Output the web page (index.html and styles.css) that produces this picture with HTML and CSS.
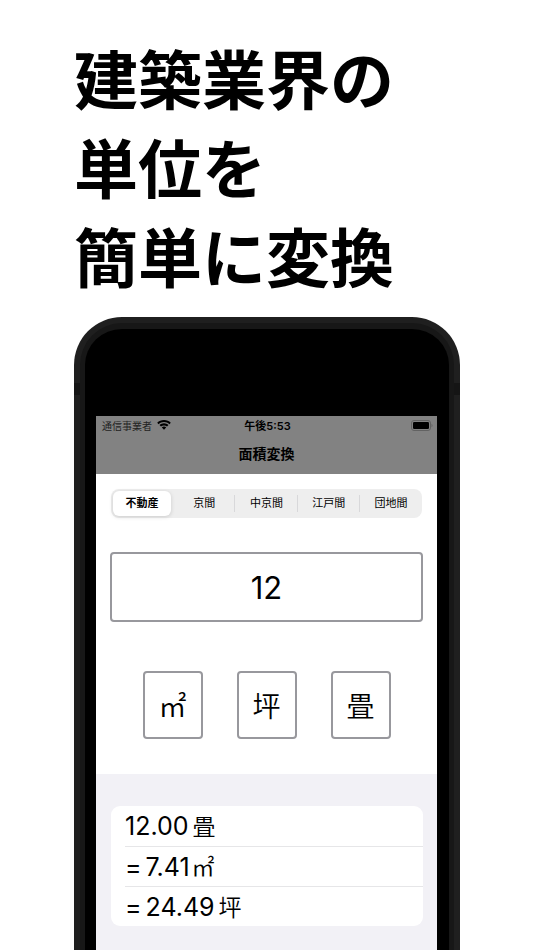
FILE: index.html
```html
<!DOCTYPE html>
<html lang="ja">
<head>
    <meta charset="UTF-8">
    <meta name="viewport" content="width=device-width, initial-scale=1.0">
    <title>面積変換</title>
    <link rel="stylesheet" href="styles.css">
</head>
<body>
    <h1 class="headline">建築業界の<br>単位を<br>簡単に変換</h1>

    <!-- Phone -->
    <div class="phone">
        <div class="bezel">
            <main class="screen">
                <header class="top">
                    <div class="status">
                        <div class="carrier">
                            <span>通信事業者</span>
                            <svg class="wifi" viewBox="0 0 14 10" width="14" height="10">
                                <path d="M7 0C4.300 0 1.900 1 .2 2.700L1.600 4.200C3 2.800 4.900 2 7 2s4 .8 5.400 2.200l1.400-1.500C12.100 1 9.700 0 7 0z"/>
                                <path d="M7 3.300c-1.700 0-3.300.7-4.500 1.800L4 6.600c.8-.8 1.800-1.200 3-1.200s2.200.4 3 1.200l1.500-1.500C10.300 4 8.700 3.300 7 3.300z"/>
                                <path d="M7 6.600c-.9 0-1.600.3-2.200.9L7 9.800l2.200-2.300C8.600 6.900 7.900 6.600 7 6.600z"/>
                            </svg>
                        </div>
                        <span class="time">午後5:53</span>
                        <svg class="battery" viewBox="0 0 22 11" width="22" height="11">
                            <rect x=".5" y=".5" width="19" height="10" rx="2.500" fill="none" stroke="#626262"/>
                            <rect x="2" y="2" width="16" height="7" rx="1.200"/>
                            <path d="M20.500 3.800v3.400c1.400-.6 1.400-2.800 0-3.400z" fill="#626262"/>
                        </svg>
                    </div>
                    <h2 class="title">面積変換</h2>
                </header>

                <!-- Input -->
                <form class="converter">
                    <div class="segments">
                        <input type="radio" id="fudosan" name="kind" checked>
                        <label for="fudosan">不動産</label>
                        <input type="radio" id="kyoma" name="kind">
                        <label for="kyoma">京間</label>
                        <input type="radio" id="chukyoma" name="kind">
                        <label for="chukyoma">中京間</label>
                        <input type="radio" id="edoma" name="kind">
                        <label for="edoma">江戸間</label>
                        <input type="radio" id="danchima" name="kind">
                        <label for="danchima">団地間</label>
                    </div>
                    <input class="amount" type="text" inputmode="decimal" value="12" aria-label="面積">
                    <div class="units">
                        <button type="button">㎡</button>
                        <button type="button">坪</button>
                        <button type="button">畳</button>
                    </div>
                </form>

                <!-- Results -->
                <section class="results">
                    <ul class="list">
                        <li>12.00<span class="unit">畳</span></li>
                        <li><span class="equals">=</span>7.41<span class="unit square">㎡</span></li>
                        <li><span class="equals">=</span>24.49<span class="unit">坪</span></li>
                    </ul>
                </section>
            </main>
        </div>
    </div>
</body>
</html>
```

FILE: styles.css
```css
* {
    box-sizing: border-box;
}
body {
    margin: 0;
    padding: 32px 74px 0;
    min-height: 100vh;
    display: flex;
    flex-direction: column;
    background-color: #fff;
    color: #000;
    font-family: Inter, "Noto Sans CJK JP", sans-serif;
}
.headline {
    margin: 0 0 18px;
    font-family: "Noto Sans CJK JP", sans-serif;
    font-size: 64px;
    font-weight: 700;
    line-height: 89px;
    white-space: nowrap;
}

/* Phone */
.phone {
    position: relative;
    flex: 1;
    display: flex;
    padding: 6px 6px 0;
    background-color: #1f1f1f;
    border-radius: 48px 48px 0 0;
}
/* antenna bands on both sides */
.phone::before,
.phone::after {
    content: "";
    position: absolute;
    top: 66px;
    width: 6px;
    height: 12px;
    background-color: #151515;
}
.phone::before {
    left: 0;
}
.phone::after {
    right: 0;
}
.bezel {
    flex: 1;
    display: flex;
    padding: 87px 12px 0 11px;
    background-color: #000;
    border: solid #171717;
    border-width: 6px 5px 0;
    border-radius: 42px 42px 0 0;
}
.screen {
    flex: 1;
    display: flex;
    flex-direction: column;
    background-color: #fff;
}

/* Status bar and title */
.top {
    height: 58px;
    background-color: #828282;
}
.status {
    display: grid;
    grid-template-columns: 1fr auto 1fr;
    align-items: center;
    height: 18px;
    padding: 0 4px 0 6px;
    font-size: 11px;
}
.carrier {
    display: flex;
    align-items: center;
    gap: 5px;
    font-size: 10px;
    color: #222;
}
.wifi {
    fill: #000;
}
.time {
    font-weight: 600;
}
.battery {
    justify-self: end;
}
.title {
    margin: 0;
    font-size: 14px;
    font-weight: 600;
    line-height: 40px;
    text-align: center;
}

/* Input */
.converter {
    display: flex;
    flex-direction: column;
    gap: 34px;
    height: 300px;
    padding: 15px 14px 0;
}
.segments {
    display: grid;
    grid-template-columns: repeat(5, 1fr);
    height: 29px;
    margin: 0 1px;
    padding: 2px 0;
    background-color: #eee;
    border-radius: 8px;
}
.segments input {
    position: absolute;
    opacity: 0;
}
.segments label {
    position: relative;
    font-size: 11px;
    line-height: 25px;
    text-align: center;
    border-radius: 6px;
    cursor: pointer;
}
.segments label:not(:last-child)::after {
    content: "";
    position: absolute;
    top: 4px;
    right: 0;
    width: 1px;
    height: 17px;
    background-color: #d8d8da;
}
.segments input:checked + label {
    margin: 0 2px;
    background-color: #fff;
    font-weight: 600;
    box-shadow: 0 1px 4px rgba(0, 0, 0, 0.15);
}
.segments input:checked + label::after {
    display: none;
}
.amount {
    width: 100%;
    height: 70px;
    padding: 0;
    background-color: #fff;
    border: 2px solid #98989d;
    border-radius: 4px;
    color: #000;
    font-family: inherit;
    font-size: 31px;
    text-align: center;
}
.units {
    display: flex;
    justify-content: center;
    gap: 34px;
    margin-top: 15px;
}
.units button {
    width: 60px;
    height: 68px;
    padding: 0;
    background-color: #fff;
    border: 2px solid #98989d;
    border-radius: 4px;
    color: #000;
    font-family: "Noto Sans CJK JP", sans-serif;
    font-size: 28px;
    font-weight: 350;
    cursor: pointer;
}

/* Results */
.results {
    flex: 1;
    padding: 32px 14px 0 15px;
    background-color: #f2f1f6;
}
.list {
    margin: 0;
    padding: 0 0 0 14px;
    list-style: none;
    background-color: #fff;
    border-radius: 9px;
}
.list li {
    height: 40px;
    font-size: 25px;
    line-height: 40px;
}
.list li + li {
    border-top: 1px solid #e6e6e8;
}
.equals {
    margin-right: 4px;
}
.unit {
    margin-left: 4px;
    font-size: 23px;
    font-weight: 350;
}
.square {
    margin-left: 2px;
}
```
